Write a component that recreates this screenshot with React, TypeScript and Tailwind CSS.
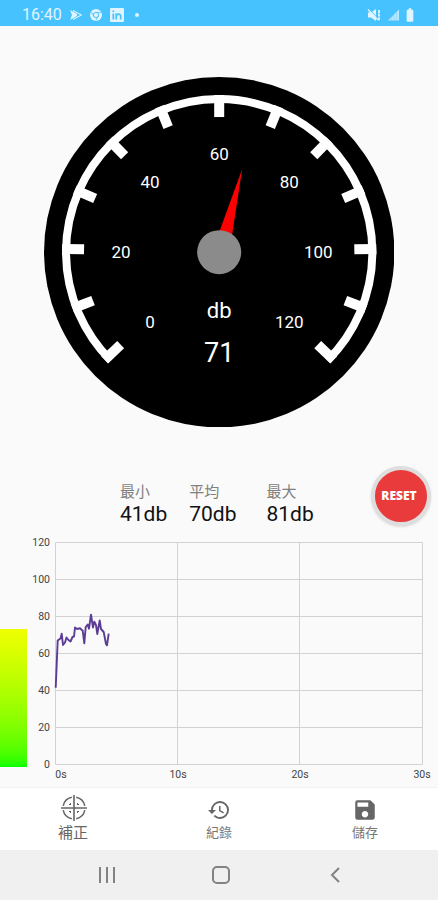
import React from "react";
import { MdHistory, MdSave, MdBatteryFull } from "react-icons/md";

const CENTER = 175;

// The first and last tick sit inside the ends of the arc.
const TICK_ANGLES = Array.from({ length: 13 }, (_, i) => -133.2 + (i * 266.4) / 12);

const DIAL_LABELS = [
  { value: 0, x: 106, y: 245 },
  { value: 20, x: 77, y: 175 },
  { value: 40, x: 106, y: 105 },
  { value: 60, x: 175, y: 77 },
  { value: 80, x: 245, y: 105 },
  { value: 100, x: 274, y: 175 },
  { value: 120, x: 245, y: 245 },
];

const TRACE =
  "28.7,152.7 30.7,105.5 33.5,103.5 34.7,98.7 36,110 38,107.5 39.5,102.5 41.5,105 43.5,106.5 45.5,102 47,101.5 48,92.5 50,94 53,93.3 55.7,95.7 57.3,108.3 58.7,92 60.7,89.5 62,93.7 64,79.7 66,92.5 67.3,86.7 69,90 70.3,99 72.7,85.5 74,94 76.7,97 79,109 80,110.3 81.7,98.7";

function StatusBar() {
  return (
    <header className="flex h-[26px] items-center bg-[#46c2ff] pt-1 pr-5 pl-[22px] text-[#e0f4ff]">
      <span className="text-base leading-5">16:40</span>
      <svg className="ml-2 h-3 w-3" viewBox="0 0 12 12" fill="currentColor" aria-hidden="true">
        <path d="M0 1 7 5 7 7 0 11 2 6Z" />
        <path d="M3 1.5 11.5 6 3 10.5" fill="none" stroke="currentColor" strokeWidth="1.1" />
      </svg>
      <svg className="ml-2 h-3 w-3" viewBox="0 0 12 12" aria-hidden="true">
        <circle cx="6" cy="6" r="6" fill="currentColor" />
        <circle cx="6" cy="6" r="2.6" fill="none" stroke="#46c2ff" />
        <path d="M6 3.4H11M3.8 7.3 1.3 3M8.2 7.3 5.8 11.5" stroke="#46c2ff" strokeWidth=".8" />
      </svg>
      <svg className="ml-2 h-3.5 w-3.5" viewBox="0 0 14 14" aria-hidden="true">
        <rect width="14" height="14" rx="1" fill="currentColor" />
        <path d="M3.3 5.5V11.5M3.3 2.4V4M6.2 11.5V5.5M6.2 8.5C6.2 5.5 10.7 5 10.7 8.3V11.5" fill="none" stroke="#46c2ff" strokeWidth="1.7" />
      </svg>
      <span className="ml-[11px] h-1 w-1 rounded-full bg-current" />
      <svg className="ml-auto h-3.5 w-3.5" viewBox="0 0 14 14" aria-hidden="true">
        <path d="M1 4.5H4L9 1V13L4 9.5H1Z" fill="currentColor" />
        <path d="M2 1 11 10.5" stroke="#46c2ff" strokeWidth="1" />
        <path d="M1 1.5 11 12" stroke="currentColor" strokeWidth="1.2" />
        <path d="M12 2V12.5" stroke="currentColor" strokeWidth="1.8" strokeDasharray="3 .6" />
      </svg>
      <svg className="ml-[7px] h-3 w-[11px]" viewBox="0 0 12 12" aria-hidden="true">
        <path d="M0 12 12 0V12Z" fill="currentColor" opacity=".75" />
        <path d="M3.5 9V12M6.5 6V12M9.5 3V12" stroke="#46c2ff" strokeWidth=".4" />
      </svg>
      <MdBatteryFull className="ml-[3px] h-4 w-4" />
    </header>
  );
}

function Gauge() {
  return (
    <svg className="mx-auto mt-[51px] aspect-square w-4/5" viewBox="0 0 350 350" role="img" aria-label="71 db">
      <circle cx={CENTER} cy={CENTER} r="175" fill="#000" />
      <path d="M66.8 283.2A153 153 0 1 1 283.2 283.2" fill="none" stroke="#fff" strokeWidth="8" />
      {TICK_ANGLES.map((angle) => (
        <rect key={angle} x="170" y="18" width="10" height="22" fill="#fff" transform={`rotate(${angle} ${CENTER} ${CENTER})`} />
      ))}
      <g fill="#fff" textAnchor="middle">
        {DIAL_LABELS.map(({ value, x, y }) => (
          <text key={value} x={x} y={y + 6} fontSize="17">
            {value}
          </text>
        ))}
        <text x={CENTER} y="241" fontSize="22">db</text>
        <text x={CENTER} y="285" fontSize="27">71</text>
      </g>
      <path d="M198 92 172 163 187 163Z" fill="#f00" />
      <circle cx={CENTER} cy={CENTER} r="22" fill="#8b8b8b" />
    </svg>
  );
}

function Stat({ label, value }: { label: string; value: string }) {
  return (
    <div>
      <dt className="text-[15px] leading-5 text-[#808080]">{label}</dt>
      <dd className="text-[21px] leading-6 text-[#111]">{value}</dd>
    </div>
  );
}

function Stats() {
  return (
    <section className="mt-[38px] flex h-[62px] items-center pr-[7px] pl-[120px]">
      <dl className="flex gap-[22px] pt-4">
        <Stat label="最小" value="41db" />
        <Stat label="平均" value="70db" />
        <div className="pl-2">
          <Stat label="最大" value="81db" />
        </div>
      </dl>
      <button className="ml-auto h-[60px] w-[60px] rounded-full border-4 border-[#dedede] bg-[#e93a3c] pr-1 font-['Open_Sans',sans-serif] text-xs font-extrabold text-white shadow-sm">
        RESET
      </button>
    </section>
  );
}

function History() {
  return (
    <section className="mt-2 flex items-end">
      <div className="mb-[18px] h-[138px] w-[27px] bg-linear-to-t from-[#00ff00] to-[#f0ff00]" />
      <svg className="min-w-0 flex-1" viewBox="0 0 411 250" role="img" aria-label="db / s">
        <g stroke="#d2d2d2" strokeWidth="1">
          {[0, 1, 2, 3, 4, 5, 6].map((i) => (
            <path key={i} d={`M28.5 ${7.5 + i * 37}H395.5`} />
          ))}
          {[28.5, 150.5, 272.5, 395.5].map((x) => (
            <path key={x} d={`M${x} 7.5V229.5`} />
          ))}
        </g>
        <g fill="#444" fontSize="10.5" textAnchor="end">
          {[120, 100, 80, 60, 40, 20, 0].map((value, i) => (
            <text key={value} x="23" y={11 + i * 37}>
              {value}
            </text>
          ))}
        </g>
        <g fill="#444" fontSize="10.5" textAnchor="middle">
          <text x="34" y="243">0s</text>
          <text x="151" y="243">10s</text>
          <text x="273" y="243">20s</text>
          <text x="395" y="243">30s</text>
        </g>
        <polyline points={TRACE} fill="none" stroke="#5b3d96" strokeWidth="1.9" strokeLinejoin="round" />
      </svg>
    </section>
  );
}

function CalibrateIcon() {
  return (
    <svg className="h-[26px] w-[26px]" viewBox="0 0 26 26" fill="none" stroke="currentColor" aria-hidden="true">
      <path d="M13 0V26M0 13H26" strokeWidth="1.6" />
      <path d="M10.8 2.2A11 11 0 0 0 2.2 10.8M15.2 2.2A11 11 0 0 1 23.8 10.8M23.8 15.2A11 11 0 0 1 15.2 23.8M10.8 23.8A11 11 0 0 1 2.2 15.2" strokeWidth="1.5" />
      <path d="M8 9.5H10M9.5 8V10M16 9.5H18M16.5 8V10M8 16.5H10M9.5 16V18M16 16.5H18M16.5 16V18" strokeWidth="1" />
    </svg>
  );
}

function BottomNav() {
  const item = "flex flex-1 flex-col items-center text-[#666]";
  return (
    <nav className="mt-auto flex h-[63px] border-t border-[#f3f3f3] bg-white">
      <button className={item}>
        <span className="mt-[7px] flex h-[26px] items-center pl-px"><CalibrateIcon /></span>
        <span className="text-[15px] leading-6">補正</span>
      </button>
      <button className={item}>
        <span className="mt-[9px] flex h-[26px] items-center"><MdHistory className="h-6 w-6" /></span>
        <span className="text-[13px] leading-5 text-[#777]">紀錄</span>
      </button>
      <button className={item}>
        <span className="mt-[9px] flex h-[26px] items-center"><MdSave className="h-[26px] w-[26px]" /></span>
        <span className="text-[13px] leading-5 text-[#777]">儲存</span>
      </button>
    </nav>
  );
}

function SystemNav() {
  const item = "flex flex-1 items-center justify-center";
  return (
    <nav className="flex h-[50px] bg-[#f0f0f0] pr-[46px] pl-[50px] text-[#828282]">
      <button className={item} aria-label="Recents">
        <svg className="h-4 w-[18px]" viewBox="0 0 18 16" fill="none" stroke="currentColor" strokeWidth="2">
          <path d="M2 0V16M9 0V16M16 0V16" />
        </svg>
      </button>
      <button className={item} aria-label="Home">
        <svg className="h-[18px] w-[18px]" viewBox="0 0 18 18" fill="none" stroke="currentColor" strokeWidth="2">
          <rect x="1" y="1" width="16" height="16" rx="4" />
        </svg>
      </button>
      <button className={item} aria-label="Back">
        <svg className="h-4 w-[10px]" viewBox="0 0 10 16" fill="none" stroke="currentColor" strokeWidth="2">
          <path d="M9 1 2 8 9 15" />
        </svg>
      </button>
    </nav>
  );
}

export default function App() {
  return (
    <div className="flex min-h-screen flex-col bg-[#fafafa] font-[Roboto,'Noto_Sans_CJK_TC',sans-serif]">
      <StatusBar />
      <main>
        <Gauge />
        <Stats />
        <History />
      </main>
      <BottomNav />
      <SystemNav />
    </div>
  );
}
